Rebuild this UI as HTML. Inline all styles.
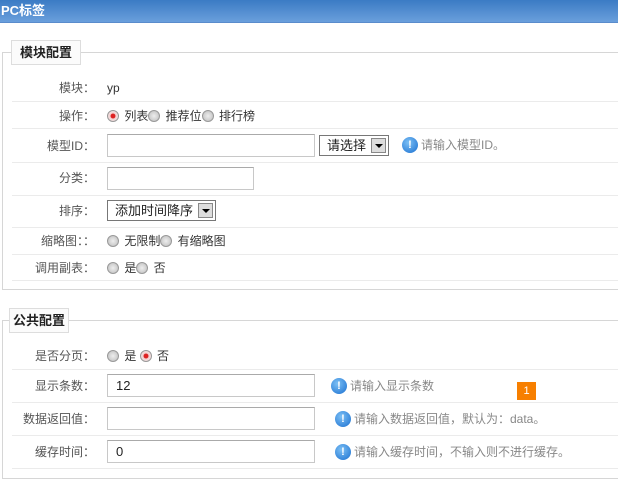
<!DOCTYPE html>
<html><head><meta charset="utf-8"><style>
*{margin:0;padding:0;box-sizing:border-box}
body{width:618px;height:503px;background:#fff;position:relative;overflow:hidden;font:12px "Liberation Sans","Noto Sans CJK SC","WenQuanYi Zen Hei",sans-serif;color:#555}
.a{position:absolute}
.hdr{left:0;top:0;width:618px;height:23px;background:linear-gradient(#3b7bc4,#6a9fdc);color:#fff;font-weight:bold;font-size:13px;line-height:22px;padding-left:1px;border-bottom:1px solid #5a8ccc}
.fs{border:1px solid #d6d6d6;border-right:none}
.lg{background:#fbfbfb;border:1px solid #ddd;font-weight:bold;color:#222;font-size:13px;text-align:center;line-height:23px}
.lb{width:95px;text-align:right;line-height:14px}
.hr{left:12px;width:606px;height:1px;background:#ebebeb}
.in{border:1px solid #c8c8c8;border-top-color:#aaa;background:#fff;height:23px;line-height:21px;padding-left:8px;color:#222;font-size:13px}
.sel{border:1px solid #777;background:#fff;height:21px;line-height:19px;padding-left:7px;font-size:13px;color:#222}
.sel i{position:absolute;right:2px;top:2px;width:15px;height:15px;border:1px solid #888;background:#ddd}
.sel i:after{content:"";position:absolute;left:3px;top:5px;border:4px solid transparent;border-top:4px solid #000;border-bottom:0}
.r{display:inline-block;width:12px;height:12px;border-radius:50%;border:1px solid #999;background:radial-gradient(#eee,#bbb);vertical-align:-2px;margin-right:2px}
.r.on{background:radial-gradient(#d22 30%,#f4d0d0 40%,#eee)}
.t{line-height:14px;color:#333}
.tip{line-height:16px;color:#888;display:flex;align-items:center}
.ic{display:inline-block;width:16px;height:16px;border-radius:50%;background:radial-gradient(circle at 40% 35%,#7cc0f5,#1a6fd0);color:#fff;font-weight:bold;font-size:11px;text-align:center;line-height:16px;margin-right:3px}
</style></head><body>
<div class="a hdr">PC标签</div>

<div class="a fs" style="left:2px;top:52px;width:616px;height:238px"></div>
<div class="a lg" style="left:11px;top:40px;width:70px;height:25px">模块配置</div>

<div class="a lb" style="left:0;top:81px">模块：</div><div class="a t" style="left:107px;top:81px">yp</div>
<div class="a hr" style="top:101px"></div>
<div class="a lb" style="left:0;top:109px">操作：</div>
<div class="a t" style="left:107px;top:109px"><span class="r on"></span> 列表<span class="r"></span> 推荐位<span class="r"></span> 排行榜</div>
<div class="a hr" style="top:128px"></div>
<div class="a lb" style="left:0;top:139px">模型ID：</div>
<div class="a in" style="left:107px;top:134px;width:208px"></div>
<div class="a sel" style="left:319px;top:135px;width:70px">请选择<i></i></div>
<div class="a tip" style="left:402px;top:137px"><span class="ic">!</span>请输入模型ID。</div>
<div class="a hr" style="top:162px"></div>
<div class="a lb" style="left:0;top:171px">分类：</div>
<div class="a in" style="left:107px;top:167px;width:147px"></div>
<div class="a hr" style="top:195px"></div>
<div class="a lb" style="left:0;top:204px">排序：</div>
<div class="a sel" style="left:107px;top:200px;width:109px">添加时间降序<i></i></div>
<div class="a hr" style="top:227px"></div>
<div class="a lb" style="left:0;top:234px">缩略图：：</div>
<div class="a t" style="left:107px;top:234px"><span class="r"></span> 无限制<span class="r"></span> 有缩略图</div>
<div class="a hr" style="top:254px"></div>
<div class="a lb" style="left:0;top:261px">调用副表：</div>
<div class="a t" style="left:107px;top:261px"><span class="r"></span> 是<span class="r"></span> 否</div>
<div class="a hr" style="top:280px"></div>

<div class="a fs" style="left:2px;top:320px;width:616px;height:159px"></div>
<div class="a lg" style="left:9px;top:308px;width:60px;height:25px">公共配置</div>

<div class="a lb" style="left:0;top:349px">是否分页：</div>
<div class="a t" style="left:107px;top:349px"><span class="r"></span> 是 <span class="r on"></span> 否</div>
<div class="a hr" style="top:369px"></div>
<div class="a lb" style="left:0;top:379px">显示条数：</div>
<div class="a in" style="left:107px;top:374px;width:208px">12</div>
<div class="a tip" style="left:331px;top:378px"><span class="ic">!</span>请输入显示条数</div>
<div class="a" style="left:517px;top:382px;width:19px;height:18px;background:#f77f00;color:#fff;text-align:center;line-height:18px;font-size:11px">1</div>
<div class="a hr" style="top:402px"></div>
<div class="a lb" style="left:0;top:412px">数据返回值：</div>
<div class="a in" style="left:107px;top:407px;width:208px"></div>
<div class="a tip" style="left:335px;top:411px"><span class="ic">!</span>请输入数据返回值，默认为：data。</div>
<div class="a hr" style="top:435px"></div>
<div class="a lb" style="left:0;top:445px">缓存时间：</div>
<div class="a in" style="left:107px;top:440px;width:208px">0</div>
<div class="a tip" style="left:335px;top:444px"><span class="ic">!</span>请输入缓存时间，不输入则不进行缓存。</div>
<div class="a hr" style="top:468px"></div>
</body></html>
